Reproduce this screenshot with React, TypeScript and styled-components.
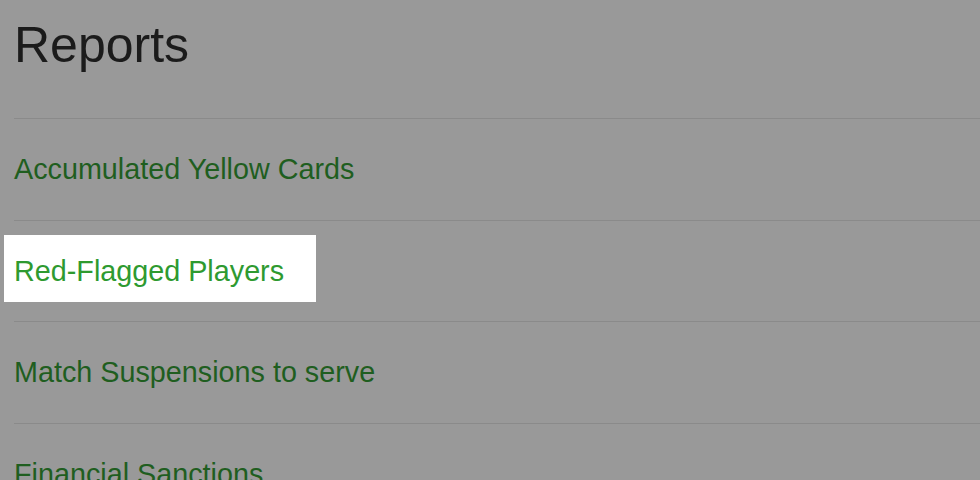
import React from "react";
import styled, { createGlobalStyle } from "styled-components";

const Global = createGlobalStyle`
  html, body {
    margin: 0;
    padding: 0;
    background: #999999;
    overflow: hidden;
  }
  body {
    font-family: "Liberation Sans", Arial, sans-serif;
  }
`;

const Page = styled.main`
  padding: 0 0 0 14px;
  min-height: 480px;
  box-sizing: border-box;
`;

const Title = styled.h1`
  margin: 15px 0 0;
  font-size: 50px;
  line-height: 60px;
  font-weight: 400;
  color: #1b1b1b;
  padding-bottom: 43px;
`;

const List = styled.ul`
  list-style: none;
  margin: 0;
  padding: 0;
`;

const Row = styled.li`
  border-top: 1px solid #8a8a8a;
  padding: 33.3px 0;
`;

const ReportLink = styled.a<{ $active?: boolean }>`
  display: block;
  width: fit-content;
  font-size: 28.75px;
  line-height: 34px;
  text-decoration: none;
  color: ${(p) => (p.$active ? "#2e9a30" : "#1f5e1f")};
  ${(p) =>
    p.$active &&
    `
    background: #ffffff;
    margin: -19px 0 -14.4px -10px;
    padding: 19px 32px 14.4px 10px;
  `}
`;

const reports = [
  "Accumulated Yellow Cards",
  "Red-Flagged Players",
  "Match Suspensions to serve",
  "Financial Sanctions",
];

export default function App() {
  return (
    <>
      <Global />
      <Page>
        <Title>Reports</Title>
        <List>
          {reports.map((r) => (
            <Row key={r}>
              <ReportLink href="#" $active={r === "Red-Flagged Players"}>
                {r}
              </ReportLink>
            </Row>
          ))}
        </List>
      </Page>
    </>
  );
}
